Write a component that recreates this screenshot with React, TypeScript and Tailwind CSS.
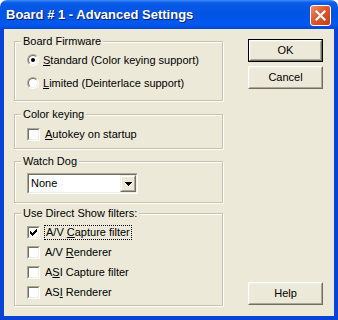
import React from "react";

const Check = ({ checked }: { checked?: boolean }) => (
  <div className="w-[13px] h-[13px] shrink-0 border border-t-[#aca899] border-l-[#aca899] border-b-white border-r-white">
    <div className="w-full h-full border border-t-[#716f64] border-l-[#716f64] border-b-[#f1efe2] border-r-[#f1efe2] bg-white flex items-center justify-center">
      {checked && (
        <svg width="7" height="7" viewBox="0 0 7 7" shapeRendering="crispEdges">
          <rect x="6" y="0" width="1" height="1" fill="#000" />
          <rect x="5" y="1" width="2" height="1" fill="#000" />
          <rect x="0" y="2" width="1" height="1" fill="#000" />
          <rect x="4" y="2" width="3" height="1" fill="#000" />
          <rect x="0" y="3" width="2" height="1" fill="#000" />
          <rect x="3" y="3" width="3" height="1" fill="#000" />
          <rect x="0" y="4" width="5" height="1" fill="#000" />
          <rect x="1" y="5" width="3" height="1" fill="#000" />
          <rect x="2" y="6" width="1" height="1" fill="#000" />
        </svg>
      )}
    </div>
  </div>
);

const Radio = ({ checked }: { checked?: boolean }) => (
  <div className="w-[12px] h-[12px] shrink-0 rounded-full border border-t-[#aca899] border-l-[#aca899] border-b-white border-r-white">
    <div className="w-full h-full rounded-full border border-t-[#716f64] border-l-[#716f64] border-b-[#f1efe2] border-r-[#f1efe2] bg-white flex items-center justify-center">
      {checked && <div className="w-[4px] h-[4px] rounded-full bg-black" />}
    </div>
  </div>
);

const Btn = ({ children, def }: { children: React.ReactNode; def?: boolean }) => (
  <div className={`w-[75px] h-[23px] ${def ? "border border-black" : ""}`}>
    <div className="w-full h-full border border-t-white border-l-white border-b-[#716f64] border-r-[#716f64]">
      <div className="w-full h-full border border-t-[#f1efe2] border-l-[#f1efe2] border-b-[#aca899] border-r-[#aca899] flex items-center justify-center bg-[#ece9d8]">
        {children}
      </div>
    </div>
  </div>
);

const Group = ({
  title,
  children,
  className,
  inner,
}: {
  title: string;
  children: React.ReactNode;
  className?: string;
  inner: string;
}) => (
  <fieldset
    className={`border border-[#c5c2b2] shadow-[inset_1px_1px_0_#fff,1px_1px_0_#fff] p-0 m-0 min-w-0 ${className ?? ""}`}
  >
    <legend className="ml-[6px] px-[2px] leading-[13px] bg-[#ece9d8]">{title}</legend>
    <div className={inner}>{children}</div>
  </fieldset>
);

export default function App() {
  return (
    <div className="w-[338px] h-[320px] flex flex-col font-['Liberation_Sans',Arial,sans-serif] text-[11px] text-black bg-white">
      <div className="h-[29px] shrink-0 rounded-t-[7px] flex items-center pl-[6px] pr-[7px] bg-[linear-gradient(to_bottom,#3d8ef7_0%,#0a5ae8_10%,#0054e3_45%,#0058ee_85%,#0046d6_100%)]">
        <span className="font-['Liberation_Sans',Arial,sans-serif] font-bold text-[13px] text-white [text-shadow:1px_1px_0_#0a1e6a] mt-[1px]">
          Board # 1 - Advanced Settings
        </span>
        <div className="flex-1" />
        <div className="w-[21px] h-[21px] rounded-[3px] border border-white bg-[linear-gradient(135deg,#ef8d6c_0%,#e0582e_45%,#c73c10_100%)] flex items-center justify-center mt-[1px]">
          <svg width="11" height="11" viewBox="0 0 11 11">
            <path d="M1.5 1.5 L9.5 9.5 M9.5 1.5 L1.5 9.5" stroke="#fff" strokeWidth="2.2" strokeLinecap="square" />
          </svg>
        </div>
      </div>
      <div className="flex-1 flex border-x-4 border-b-4 border-[#0843d6] bg-[#ece9d8] pl-[10px] pt-[6px]">
        <div className="w-[209px] flex flex-col">
          <Group title="Board Firmware" inner="px-[12px] pt-[4px] pb-[9px] flex flex-col gap-[7px]">
            <div className="h-[16px] flex items-center gap-[4px]">
              <Radio checked />
              <span>
                <span className="underline">S</span>tandard (Color keying support)
              </span>
            </div>
            <div className="h-[16px] flex items-center gap-[4px]">
              <Radio />
              <span>
                <span className="underline">L</span>imited (Deinterlace support)
              </span>
            </div>
          </Group>
          <Group title="Color keying" className="mt-[7px]" inner="px-[12px] pt-[5px] pb-[6px]">
            <div className="h-[16px] flex items-center gap-[5px]">
              <Check />
              <span>
                <span className="underline">A</span>utokey on startup
              </span>
            </div>
          </Group>
          <Group title="Watch Dog" className="mt-[6px]" inner="px-[12px] pt-[5px] pb-[8px]">
            <div className="w-[111px] h-[21px] border border-t-[#aca899] border-l-[#aca899] border-b-white border-r-white">
              <div className="w-full h-full border border-t-[#716f64] border-l-[#716f64] border-b-[#f1efe2] border-r-[#f1efe2] bg-white flex items-center">
                <span className="flex-1 pl-[2px]">None</span>
                <div className="w-[16px] h-[17px] border border-t-[#f1efe2] border-l-[#f1efe2] border-b-[#716f64] border-r-[#716f64]">
                  <div className="w-full h-full border border-t-white border-l-white border-b-[#aca899] border-r-[#aca899] bg-[#ece9d8] flex items-center justify-center">
                    <svg width="7" height="4" viewBox="0 0 7 4" shapeRendering="crispEdges">
                      <path d="M0 0 H7 V1 H6 V2 H5 V3 H4 V4 H3 V3 H2 V2 H1 V1 H0 Z" fill="#000" />
                    </svg>
                  </div>
                </div>
              </div>
            </div>
          </Group>
          <Group title="Use Direct Show filters:" className="mt-[4px]" inner="px-[12px] pt-[2px] pb-[3px] flex flex-col">
            <div className="h-[20px] flex items-center gap-[4px]">
              <Check checked />
              <span className="border border-dotted border-black px-[1px] leading-[13px]">
                A/V <span className="underline">C</span>apture filter
              </span>
            </div>
            <div className="h-[20px] flex items-center gap-[5px]">
              <Check />
              <span>
                A/V <span className="underline">R</span>enderer
              </span>
            </div>
            <div className="h-[20px] flex items-center gap-[5px]">
              <Check />
              <span>
                A<span className="underline">S</span>I Capture filter
              </span>
            </div>
            <div className="h-[20px] flex items-center gap-[5px]">
              <Check />
              <span>
                AS<span className="underline">I</span> Renderer
              </span>
            </div>
          </Group>
        </div>
        <div className="ml-[25px] w-[75px] flex flex-col pt-[4px] pb-[11px]">
          <Btn def>OK</Btn>
          <div className="mt-[4px]">
            <Btn>Cancel</Btn>
          </div>
          <div className="flex-1" />
          <Btn>Help</Btn>
        </div>
      </div>
    </div>
  );
}
